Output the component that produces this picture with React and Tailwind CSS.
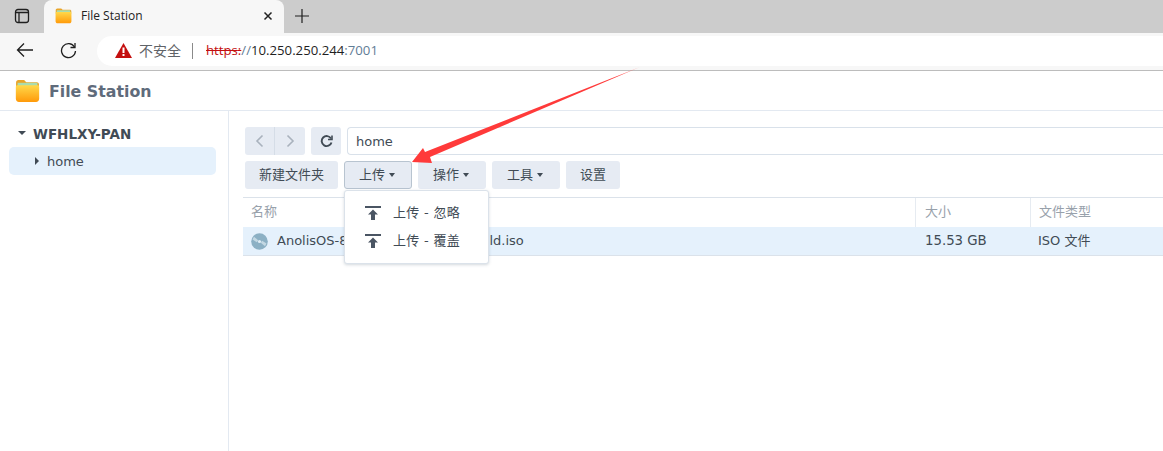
import React from 'react';

const dsmFont = "font-['DejaVu_Sans','Noto_Sans_CJK_SC',sans-serif]";
const chromeFont = "font-['Open_Sans','Noto_Sans_CJK_SC',sans-serif]";

const FolderIcon = ({ size }) => (
    <svg width={size} height={size} viewBox="0 0 24 24">
        <defs>
            <linearGradient id={`f${size}`} x1="0" y1="0" x2="0" y2="1">
                <stop offset="0" stopColor="#ffd84a" />
                <stop offset="1" stopColor="#ff9a0a" />
            </linearGradient>
        </defs>
        <path d="M1 4.500C1 3 2 2 3.200 2h5.600l2 2H21c1 0 2 .8 2 2v3H1z" fill="#e9a52a" />
        <rect x="2.500" y="4.600" width="19" height="6" fill="#a9dcae" />
        <path d="M.8 8.500C.8 7.600 1.500 7 2.400 7h19.200c.9 0 1.600.6 1.600 1.500V20c0 1.800-1.200 3-3 3H3.800c-1.800 0-3-1.200-3-3z" fill={`url(#f${size})`} />
    </svg>
);

const UploadIcon = () => (
    <svg width="16" height="16" viewBox="0 0 16 16" fill="#4a5563">
        <rect x="0" y="1" width="16" height="2" />
        <path d="M8 4.500 13 9.500H10V15H6V9.500H3z" />
    </svg>
);

const DiscIcon = () => (
    <svg width="17" height="17" viewBox="0 0 17 17">
        <circle cx="8.500" cy="8.500" r="8.300" fill="#8cb0c4" />
        <path d="M3 3.800 7.200 7.200 5.800 9.200 1.500 6.500zM14 13.200 9.800 9.800 11.200 7.800 15.500 10.500z" fill="#c3d8e3" />
        <circle cx="8.500" cy="8.500" r="1.600" fill="#e0edf5" />
    </svg>
);

const Caret = () => (
    <span className="ml-[4px] inline-block w-0 h-0 border-x-[3.500px] border-x-transparent border-t-[4px] border-t-[#414b55]" />
);

const ToolButton = ({ label, width, caret, active }) => (
    <button
        className={`h-[28px] rounded-[3px] flex items-center justify-center text-[13px] text-[#414b55] bg-[#e6ebf3] ${width} ${caret ? 'pr-[2px]' : ''} ${active ? 'border border-[#b8c4d0]' : ''}`}
    >
        {label}
        {caret && <Caret />}
    </button>
);

const App = () => {
    return (
        <div className="relative w-[1163px] h-[451px] overflow-hidden bg-white flex flex-col">
            {/* browser tab strip */}
            <div className={`h-[33px] bg-[#cccccc] flex ${chromeFont}`}>
                <div className="w-[44px] h-[32px] flex items-center justify-center">
                    <svg width="16" height="16" viewBox="0 0 16 16" fill="none" stroke="#1f1f1f" strokeWidth="1.300">
                        <rect x="1.500" y="1.500" width="13" height="13" rx="2.500" />
                        <path d="M1.500 4.500h13M5 4.500v10" />
                    </svg>
                </div>
                <div className="w-[240px] h-[33px] bg-[#f7f7f7] rounded-t-[8px] flex items-center pl-[11px] pr-[11px] pb-[2px]">
                    <FolderIcon size={17} />
                    <span className="ml-[9px] text-[12px] text-[#222222] flex-1">File Station</span>
                    <svg width="10" height="10" viewBox="0 0 10 10" stroke="#222222" strokeWidth="1.500">
                        <path d="M1.500 1.500l7 7M8.500 1.500l-7 7" />
                    </svg>
                </div>
                <div className="w-[36px] h-[32px] flex items-center justify-center">
                    <svg width="16" height="16" viewBox="0 0 16 16" stroke="#1f1f1f" strokeWidth="1.200">
                        <path d="M8 1v14M1 8h14" />
                    </svg>
                </div>
            </div>

            {/* address bar */}
            <div className={`h-[38px] bg-[#f7f7f7] border-b border-[#bcbcbc] flex items-start pt-[3px] ${chromeFont}`}>
                <div className="w-[97px] h-[30px] flex items-center shrink-0 pl-[16px] pb-[2px]">
                    <svg width="18" height="16" viewBox="0 0 18 16" fill="none" stroke="#1f1f1f" strokeWidth="1.300">
                        <path d="M17 8H1.500M8 1.500 1.500 8 8 14.500" />
                    </svg>
                    <svg className="ml-[26px]" width="17" height="17" viewBox="0 0 17 17" fill="none" stroke="#1f1f1f" strokeWidth="1.300">
                        <path d="M14.500 5A7 7 0 1 0 15.500 9" />
                        <path d="M15 1v4.500h-4.500" />
                    </svg>
                </div>
                <div className="flex-1 h-[30px] bg-white rounded-l-full flex items-center pl-[18px] pb-[1px]">
                    <svg width="17" height="15" viewBox="0 0 17 15">
                        <path d="M8.500 0 17 15H0z" fill="#c40f0f" />
                        <rect x="7.500" y="4.500" width="2" height="5.500" fill="#ffffff" />
                        <rect x="7.500" y="11" width="2" height="2" fill="#ffffff" />
                    </svg>
                    <span className="ml-[7px] text-[14px] text-[#5f6368]">不安全</span>
                    <span className="ml-[11px] w-px h-[16px] bg-[#8a8a8a]" />
                    <span className="ml-[13px] text-[13.2px] text-[#5f7d96]">
                        <span className="line-through decoration-[#c40f0f] text-[#c40f0f]">https</span>
                        <span className="text-[#c40f0f] line-through">:</span>
                        <span>//</span>
                        <span className="text-[#1f1f1f]">10.250.250.244</span>
                        <span>:7001</span>
                    </span>
                </div>
            </div>

            {/* file station title */}
            <div className={`h-[40px] border-b border-[#e3e9f1] flex items-center pl-[15px] ${dsmFont}`}>
                <FolderIcon size={25} />
                <span className="ml-[9px] pt-[2px] text-[15.8px] font-bold text-[#5f6b7b]">File Station</span>
            </div>

            <div className={`flex-1 flex ${dsmFont}`}>
                {/* tree */}
                <div className="w-[229px] border-r border-[#e3e9f1] pl-[9px] pr-[12px] pt-[12px] shrink-0">
                    <div className="h-[20px] flex items-center pl-[9px]">
                        <span className="w-0 h-0 border-x-[4px] border-x-transparent border-t-[4px] border-t-[#414b55]" />
                        <span className="ml-[7px] pt-[2px] text-[13.500px] font-bold text-[#414b55]">WFHLXY-PAN</span>
                    </div>
                    <div className="mt-[4px] h-[28px] rounded-[5px] bg-[#e5f1fc] flex items-center pl-[26px]">
                        <span className="w-0 h-0 border-y-[4px] border-y-transparent border-l-[4px] border-l-[#414b55]" />
                        <span className="ml-[8px] pt-[2px] text-[13px] text-[#414b55]">home</span>
                    </div>
                </div>

                {/* main */}
                <div className="flex-1 pt-[16px] pl-[14px] min-w-0">
                    <div className="pl-[2px] flex gap-[6px]">
                        <div className="w-[60px] h-[28px] rounded-[3px] bg-[#e6ebf3] flex">
                            <div className="w-[30px] flex items-center justify-center border-r border-[#d5dde7]">
                                <svg width="9" height="14" viewBox="0 0 9 14" fill="none" stroke="#a9b2bd" strokeWidth="1.600">
                                    <path d="M7.500 1.500 2 7l5.500 5.500" />
                                </svg>
                            </div>
                            <div className="flex-1 flex items-center justify-center">
                                <svg width="9" height="14" viewBox="0 0 9 14" fill="none" stroke="#a9b2bd" strokeWidth="1.600">
                                    <path d="M1.500 1.500 7 7l-5.500 5.500" />
                                </svg>
                            </div>
                        </div>
                        <div className="w-[30px] h-[28px] rounded-[3px] bg-[#e6ebf3] flex items-center justify-center">
                            <svg width="13" height="13" viewBox="0 0 13 13" fill="none" stroke="#414b55" strokeWidth="1.900">
                                <path d="M11 3.500A5 5 0 1 0 11.500 7.500" />
                                <path d="M12 .5v4H8" strokeWidth="1.600" />
                            </svg>
                        </div>
                        <div className="flex-1 h-[28px] rounded-l-[4px] border border-r-0 border-[#d9e1ea] flex items-center pl-[8px] pt-[2px] text-[13px] text-[#414b55]">
                            home
                        </div>
                    </div>

                    <div className="pl-[2px] mt-[6px] flex gap-[6px]">
                        <ToolButton label="新建文件夹" width="w-[93px]" />
                        <ToolButton label="上传" width="w-[68px]" caret active />
                        <ToolButton label="操作" width="w-[68px]" caret />
                        <ToolButton label="工具" width="w-[68px]" caret />
                        <ToolButton label="设置" width="w-[54px]" />
                    </div>

                    {/* file list */}
                    <div className="mt-[8px] border-t border-[#dbe2ea] text-[13px]">
                        <div className="h-[29px] flex items-center text-[#98a1ab]">
                            <div className="w-[672px] pl-[8px] pb-[2px]">名称</div>
                            <div className="w-[115px] h-full flex items-center pl-[9px] pb-[2px] border-l border-[#e6ebf1]">大小</div>
                            <div className="flex-1 h-full flex items-center pl-[8px] pb-[2px] border-l border-[#e6ebf1]">文件类型</div>
                        </div>
                        <div className="h-[29px] bg-[#e5f1fc] border-b border-[#dbe2ea] flex items-center text-[#414b55]">
                            <div className="w-[672px] pl-[8px] flex items-center">
                                <DiscIcon />
                                <span className="ml-[9px]">AnolisOS-8.6-GA-x86_64-dvd-build.iso</span>
                            </div>
                            <div className="w-[115px] pl-[10px] text-[13.300px]">15.53 GB</div>
                            <div className="flex-1 pl-[8px]">ISO 文件</div>
                        </div>
                    </div>
                </div>
            </div>

            {/* upload dropdown */}
            <div className={`absolute left-[344px] top-[190px] w-[145px] h-[74px] bg-white rounded-[3px] border border-[#dbe2ea] shadow-[0_1px_3px_rgba(80,100,120,0.25)] py-[8px] ${dsmFont}`}>
                <div className="h-[28px] flex items-center pl-[20px] text-[13px] tracking-[0.3px] text-[#414b55]">
                    <UploadIcon />
                    <span className="ml-[12px]">上传 - 忽略</span>
                </div>
                <div className="h-[28px] flex items-center pl-[20px] text-[13px] tracking-[0.3px] text-[#414b55]">
                    <UploadIcon />
                    <span className="ml-[12px]">上传 - 覆盖</span>
                </div>
            </div>

            {/* red annotation arrow */}
            <svg className="absolute left-0 top-0 pointer-events-none" width="1163" height="451">
                <defs>
                    <linearGradient id="arrowFade" x1="640" y1="67" x2="412" y2="162" gradientUnits="userSpaceOnUse">
                        <stop offset="0" stopColor="#ff3a3a" stopOpacity="0.5" />
                        <stop offset="0.1" stopColor="#ff3a3a" />
                        <stop offset="1" stopColor="#ff3a3a" />
                    </linearGradient>
                </defs>
                <polygon points="640,67 430,157 432,163 412,162 423,148 425,152" fill="url(#arrowFade)" />
            </svg>
        </div>
    );
};

export default App;
